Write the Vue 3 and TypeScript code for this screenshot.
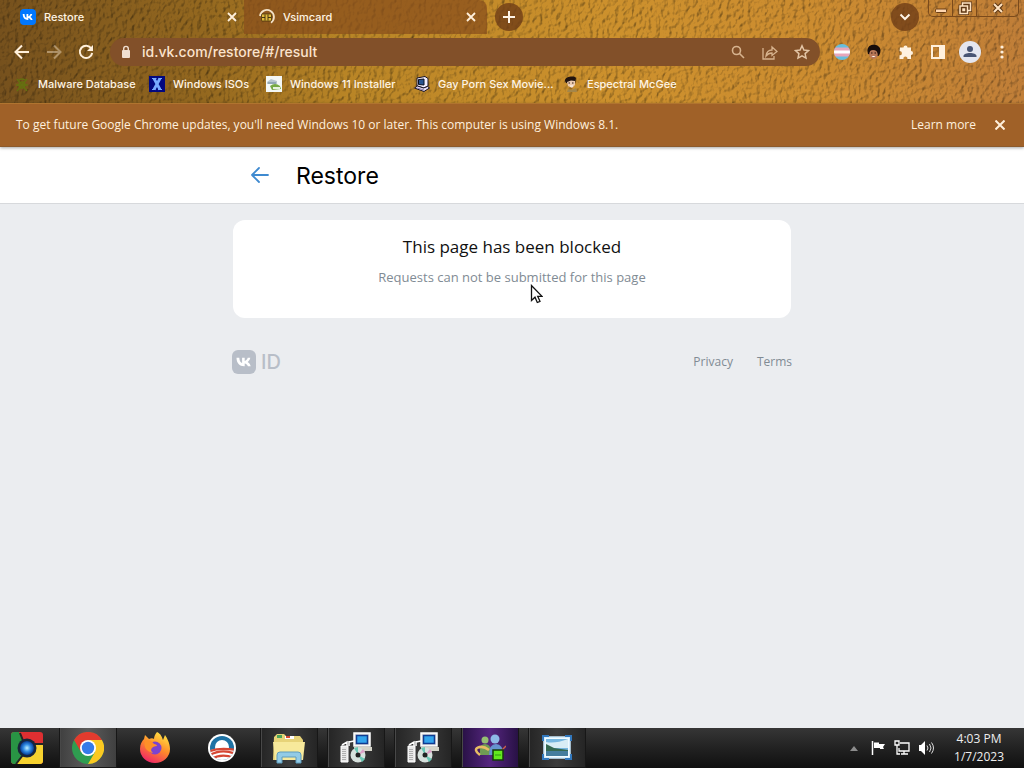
<script setup lang="ts">
import { ref } from 'vue'

interface Bookmark {
  label: string
  icon: string
}

const bookmarks: Bookmark[] = [
  { label: 'Malware Database', icon: 'bug' },
  { label: 'Windows ISOs', icon: 'x' },
  { label: 'Windows 11 Installer', icon: 'drive' },
  { label: 'Gay Porn Sex Movie...', icon: 'pc' },
  { label: 'Espectral McGee', icon: 'face' },
]
const address = ref('id.vk.com/restore/#/result')
</script>

<template>
  <div class="desktop">
    <header class="browser">
      <svg class="leather" aria-hidden="true">
        <defs>
          <linearGradient id="tan">
            <stop offset="0" stop-color="#76511d" />
            <stop offset=".2" stop-color="#94681f" />
            <stop offset=".34" stop-color="#b98526" />
            <stop offset=".6" stop-color="#cd912d" />
            <stop offset=".8" stop-color="#cc8c30" />
            <stop offset="1" stop-color="#c07e38" />
          </linearGradient>
          <filter id="grain" x="0" y="0" width="100%" height="100%" color-interpolation-filters="sRGB">
            <feTurbulence type="fractalNoise" baseFrequency="0.24 0.18" numOctaves="3" seed="8" result="n" />
            <feColorMatrix in="n" type="matrix" values="0 0 0 0 0  0 0 0 0 0  0 0 0 0 0  1 0 0 0 0" result="h" />
            <feDiffuseLighting in="h" surfaceScale="1" diffuseConstant="1.25" lighting-color="#fff" result="l">
              <feDistantLight azimuth="215" elevation="52" />
            </feDiffuseLighting>
            <feBlend in="SourceGraphic" in2="l" mode="multiply" />
          </filter>
        </defs>
        <rect width="100%" height="100%" fill="url(#tan)" filter="url(#grain)" />
      </svg>

      <div class="tabs">
        <div class="tab">
          <button class="tab-name">
            <svg class="i16" viewBox="0 0 16 16"><rect width="16" height="16" rx="4" fill="#0077ff" /><path d="M2.700 5h1.800c.1 2.400 1 3.500 2 3.800V5h1.800v2.300C9.400 7.200 10 6.200 10.400 5h1.800c-.3 1.300-1 2.300-1.800 2.900 1 .5 1.800 1.500 2.200 3h-1.900c-.4-1.100-1.200-1.800-2.400-2v2H8C4.800 10.900 2.800 8.900 2.700 5z" fill="#fff" /></svg>
            <span>Restore</span>
          </button>
          <button class="bare" aria-label="Close Restore"><svg class="i10" viewBox="0 0 10 10"><path d="M1 1l8 8M9 1L1 9" stroke="#fff0dc" stroke-width="1.800" /></svg></button>
        </div>
        <div class="tab inactive">
          <button class="tab-name">
            <svg class="i16" viewBox="0 0 16 16"><path d="M1 7A7 7 0 1 1 12 13.700" fill="none" stroke="#f3e2c8" stroke-width="1.800" /><rect x="2.500" y="5" width="10" height="7" rx="1" fill="#e0b83c" stroke="#4a350e" stroke-width=".8" /><path d="M3 8.500h3M9 8.500h3M6 5.500v6M9 5.500v6" stroke="#3a2a0c" stroke-width=".9" /></svg>
            <span>Vsimcard</span>
          </button>
          <button class="bare" aria-label="Close Vsimcard"><svg class="i10" viewBox="0 0 10 10"><path d="M1 1l8 8M9 1L1 9" stroke="#fff0dc" stroke-width="1.800" /></svg></button>
        </div>
        <button class="round" aria-label="New tab"><svg viewBox="0 0 14 14"><path d="M7 1v12M1 7h12" stroke="#fff4e6" stroke-width="2" /></svg></button>
        <button class="round search-tabs" aria-label="Search tabs"><svg viewBox="0 0 14 14"><path d="M2.500 4.500L7 9l4.500-4.500" fill="none" stroke="#fff4e6" stroke-width="2" /></svg></button>
        <div class="win-buttons">
          <button aria-label="Minimize"><svg viewBox="0 0 14 14"><rect x="1.500" y="8" width="11" height="3.500" rx="1" fill="#ffd6ae" stroke="#6a3d13" /></svg></button>
          <button aria-label="Restore window"><svg viewBox="0 0 14 14"><g fill="none"><path d="M4.500 4.500V2h8v7.500h-2.500M2 5h7.500v7.500H2zM5 8h1.500v1.500H5z" stroke="#5e3612" stroke-width="3" /><path d="M4.500 4.500V2h8v7.500h-2.500M2 5h7.500v7.500H2zM5 8h1.500v1.500H5z" stroke="#ffe3c2" stroke-width="1.500" /></g></svg></button>
          <button class="win-close" aria-label="Close window"><svg viewBox="0 0 14 14"><path d="M3 3l8 8M11 3l-8 8" stroke="#5e3612" stroke-width="4" /><path d="M3 3l8 8M11 3l-8 8" stroke="#ffe3c2" stroke-width="2" /></svg></button>
        </div>
      </div>

      <div class="toolbar">
        <button class="bare" aria-label="Back"><svg class="i16" viewBox="0 0 16 16"><path d="M15 8H2M8 1.500L1.500 8 8 14.500" fill="none" stroke="#fff0dc" stroke-width="2" /></svg></button>
        <button class="bare" aria-label="Forward"><svg class="i16 dim" viewBox="0 0 16 16"><path d="M1 8h13M8 1.500L14.500 8 8 14.500" fill="none" stroke="#fff0dc" stroke-width="2" /></svg></button>
        <button class="bare" aria-label="Reload"><svg class="i16" viewBox="0 0 16 16"><path d="M13.300 4.500A6.200 6.200 0 1 0 14.200 9" fill="none" stroke="#fff0dc" stroke-width="2" /><path d="M15 1v6H9z" fill="#fff0dc" /></svg></button>
        <div class="omnibox">
          <svg class="i16" viewBox="0 0 16 16"><rect x="4" y="6" width="8" height="8" rx="1" fill="#f0dfd0" /><path d="M5.700 6.500V4.700a2.300 2.300 0 0 1 4.600 0v1.800" fill="none" stroke="#f0dfd0" stroke-width="1.400" /></svg>
          <input v-model="address" type="text" aria-label="Address" spellcheck="false" />
          <button class="bare" aria-label="Zoom"><svg class="i16" viewBox="0 0 16 16"><g fill="none" stroke="#d7b38e" stroke-width="1.600"><circle cx="6.500" cy="6.500" r="4" /><path d="M9.500 9.500l4.500 4.500" /></g></svg></button>
          <button class="bare" aria-label="Share"><svg class="i16" viewBox="0 0 16 16"><g fill="none" stroke="#d7b38e" stroke-width="1.300"><path d="M1 4v11h11v-3" /><path d="M4 12c.5-4 2.500-6 6-6V3l5 4.500-5 4V9c-2.500 0-4.500 1-6 3z" /></g></svg></button>
          <button class="bare" aria-label="Bookmark this page"><svg class="i16" viewBox="0 0 16 16"><path d="M8 1.800l1.900 4.200 4.600.5-3.400 3.100.9 4.500L8 11.800l-4 2.300.9-4.500L1.500 6.500l4.600-.5z" fill="none" stroke="#e3c5a6" stroke-width="1.500" /></svg></button>
        </div>
        <div class="extensions">
          <button class="bare" aria-label="Flag extension"><svg class="i16" viewBox="0 0 16 16"><clipPath id="ball"><circle cx="8" cy="8" r="8" /></clipPath><g clip-path="url(#ball)"><path fill="#67bedc" d="M0 0h16v16H0z" /><path fill="#e8a6b9" d="M0 3.500h16v9H0z" /><path fill="#fff" d="M0 6.500h16v3H0z" /></g></svg></button>
          <button class="bare" aria-label="Face extension"><svg class="i16" viewBox="0 0 16 16"><path d="M2 10C0 3 4 .5 8.500.700 14 1 16.500 7 12.500 12z" fill="#170d0b" /><ellipse cx="7.500" cy="10" rx="4.300" ry="5" fill="#b87858" /><path d="M3 9c0-2 2-3 4-3 3 0 4 1 5 4l2-5-6-4-5 3z" fill="#170d0b" /><path d="M5.500 12q2 2 4 0z" fill="#fff" /><path d="M5 9h1.500M8.500 9H10" stroke="#2c1510" /></svg></button>
          <button class="bare" aria-label="Extensions"><svg class="i16" viewBox="0 0 16 16"><path d="M2 3.500h3.500a2 2 0 1 1 4 0H13V7a2 2 0 1 1 0 4v4H9.300a2 2 0 1 0-3.800 0H1.500v-3.800a2 2 0 1 0 0-3.900z" fill="#fff2e0" /></svg></button>
          <button class="bare" aria-label="Side panel"><svg class="i16" viewBox="0 0 16 16"><path d="M2 2h12v12H2z" fill="none" stroke="#fff0dc" stroke-width="2" /><path d="M9 2h5v12H9z" fill="#fff0dc" /></svg></button>
          <button class="bare avatar" aria-label="Profile"><svg viewBox="0 0 22 22"><circle cx="11" cy="11" r="11" fill="#e4e6ef" /><circle cx="11" cy="8" r="3" fill="#485574" /><path d="M4.500 16v-1c0-4 13-4 13 0v1z" fill="#485574" /></svg></button>
          <button class="bare" aria-label="Menu"><svg class="i16" viewBox="0 0 16 16"><g fill="#fff0dc"><circle cx="8" cy="3" r="1.600" /><circle cx="8" cy="8" r="1.600" /><circle cx="8" cy="13" r="1.600" /></g></svg></button>
        </div>
      </div>

      <nav class="bookmarks" aria-label="Bookmarks">
        <a v-for="b in bookmarks" :key="b.label" href="#">
          <svg class="i16" viewBox="0 0 16 16">
            <g v-if="b.icon === 'bug'" fill="none" stroke="#657010" stroke-width="1.400"><circle cx="8" cy="9" r="3" /><path d="M3 3l10 12M13 3L3 15M5 4q3-2 6 0M2 9h12" /></g>
            <g v-else-if="b.icon === 'x'"><path fill="#02087f" d="M0 0h16v16H0z" /><path d="M5 2.500l6 11M11 2.500l-6 11" stroke="#76a9ff" stroke-width="2.800" /><path d="M3 2.500h4.500M9.500 2.500h3.500M3 13.500h3.500M9 13.500h4" stroke="#76a9ff" /></g>
            <g v-else-if="b.icon === 'drive'"><path fill="#f3f7f6" d="M0 0h16v16H0z" /><path d="M1 6l4-3 6 2v3H1z" fill="#b7c6ce" /><path d="M2 7h8" stroke="#6a8795" /><path d="M4 10q5-4 10 0l1 3-9 1z" fill="#75a943" /><path d="M7 12h7" stroke="#e7f2dd" stroke-width="2" /></g>
            <g v-else-if="b.icon === 'pc'"><path d="M3 2l8-1.500 3 2V10l-4 2-7-2z" fill="#f3efff" stroke="#171326" /><path d="M4.500 3.500l5.500-.5v6l-5.500-.5z" fill="#28538f" stroke="#090e20" /><path d="M.5 12l3-2 6 2 4-1.500 2 1.500-5.500 3.500z" fill="#e8def8" stroke="#171326" /><path d="M3 12l7 2" stroke="#8c80ad" /></g>
            <g v-else><path d="M2 5C1 1 11-1 13 2l-1 6-9-1z" fill="#21130e" /><path d="M4 6l4-1.500L12 5v4l-3 3-4-2z" fill="#eccbb0" /><path d="M5.500 7h1.500M9 7h1.500" stroke="#2c1b15" /><path d="M5 13l3 1 5-2 1 4H4z" fill="#a4864a" /><path d="M7 10h3" stroke="#fff" /></g>
          </svg>
          <span>{{ b.label }}</span>
        </a>
      </nav>
    </header>

    <aside class="infobar">
      <p>To get future Google Chrome updates, you'll need Windows 10 or later. This computer is using Windows 8.1.</p>
      <a href="#">Learn more</a>
      <button class="bare" aria-label="Dismiss"><svg class="i10" viewBox="0 0 10 10"><path d="M.5.5l9 9M9.500.5l-9 9" stroke="#fff0dc" stroke-width="2" /></svg></button>
    </aside>

    <main class="page">
      <div class="page-head">
        <div class="head-inner">
          <button class="bare" aria-label="Go back"><svg class="back" viewBox="0 0 20 18"><path d="M18 8H2M9 1L2 8l7 7" fill="none" stroke="#3f8ad0" stroke-width="1.800" stroke-linecap="round" stroke-linejoin="round" /></svg></button>
          <h1>Restore</h1>
        </div>
      </div>
      <div class="column">
        <section class="card">
          <h2>This page has been blocked</h2>
          <p>Requests can not be submitted for this page</p>
          <svg class="cursor" viewBox="0 0 13 20"><path d="M1.500 1.500v15l3.500-3.300 2.300 5.300 2.700-1.200-2.300-5H12z" fill="#fff" stroke="#111" stroke-width="1.300" /></svg>
        </section>
        <footer>
          <a class="brand" href="#" aria-label="VK ID">
            <svg viewBox="0 0 24 24"><rect width="24" height="24" rx="6" fill="#b8bec8" /><path d="M4 7.300h2.800c.1 3.500 1.500 5 2.800 5.300V7.300h2.600v3.100c1.500-.2 2.500-1.500 3-3.100h2.600c-.4 2-1.500 3.500-2.700 4.200 1.400.7 2.500 2 3.100 4.300h-2.800c-.5-1.700-1.700-2.700-3.200-2.900v2.900h-.6C7 15.800 4.100 12.800 4 7.300z" fill="#fff" transform="translate(.5 .5)" /></svg>
            <span>ID</span>
          </a>
          <div class="links"><a href="#">Privacy</a><a href="#">Terms</a></div>
        </footer>
      </div>
    </main>

    <div class="taskbar">
      <div class="apps">
        <button aria-label="Classic Chrome"><svg viewBox="0 0 32 32"><clipPath id="sq"><rect width="32" height="32" rx="3" /></clipPath><radialGradient id="blue"><stop offset="0" stop-color="#c1f0ff" /><stop offset=".5" stop-color="#358fe5" /><stop offset="1" stop-color="#063c96" /></radialGradient><g clip-path="url(#sq)"><path fill="#de2f31" d="M0 0h32v32H0z" /><path d="M0 0h8l7 17-9 15H0z" fill="#299444" /><path d="M23 13h9v19H5l9-11z" fill="#f7d22f" /><path d="M9 1l6 15M32 12H17M5 32l10-13" stroke="#252525" stroke-width="2" /></g><circle cx="16" cy="16" r="9.500" fill="#18253a" /><circle cx="16" cy="16" r="7" fill="url(#blue)" /></svg></button>
        <button class="open current" aria-label="Google Chrome"><svg viewBox="0 0 32 32"><circle cx="16" cy="16" r="16" fill="#2f9d50" /><path d="M2.100 8A16 16 0 0 1 29.900 8L16 8 9 20z" fill="#e33b2e" /><path d="M16 8h13.900A16 16 0 0 1 16 32l7-12z" fill="#fbc921" /><circle cx="16" cy="16" r="8" fill="#fff" /><circle cx="16" cy="16" r="6.200" fill="#367be8" /></svg></button>
        <button aria-label="Firefox"><svg viewBox="0 0 32 32"><linearGradient id="fire" x1=".8" y1="0" x2=".3" y2="1"><stop stop-color="#ffea45" /><stop offset=".5" stop-color="#ff8a2a" /><stop offset="1" stop-color="#ed2468" /></linearGradient><path d="M18 0c4 2 5 5 6 8l2-5c2 3 5 8 5 14a15 14 0 0 1-30 0C1 12 3 9 5 7l1-4 4 4c2-1 4-1 5 0 0-2 1-5 3-7z" fill="url(#fire)" /><circle cx="16" cy="16" r="6.500" fill="#7b43cf" /><path d="M6 9c4-2 7 0 9 3 2 0 3 1 3 2-5 0-8 4-4 7-6-1-10-6-8-12z" fill="#ff9028" /></svg></button>
        <button aria-label="Obama logo"><svg viewBox="0 0 32 32"><clipPath id="disc"><circle cx="16" cy="16" r="12" /></clipPath><circle cx="16" cy="16" r="14" fill="#fff" /><g clip-path="url(#disc)"><path fill="#1e72a4" d="M0 0h32v32H0z" /><circle cx="16" cy="15" r="7" fill="#fff" /><path d="M0 20q17-8 32 0v12H0z" fill="#fff" /><path d="M2 20q10-5 28-2M2 24q13-8 28-2M4 28q12-8 26-1" fill="none" stroke="#d54734" stroke-width="2.200" /></g></svg></button>
        <button class="open" aria-label="File Explorer"><svg viewBox="0 0 32 32"><path d="M1 5l3-3h7l2 2h14l3 4v20H0z" fill="#e7d378" /><path d="M4 3h5v3H4z" fill="#4ca359" /><path d="M12 4h9v3h-9z" fill="#fff" /><path d="M13 5h4" stroke="#d84a34" stroke-width="2" /><path d="M0 10h32l-2 18H2z" fill="#f7e99b" /><path d="M4 31v-8q0-3 3-3h18q3 0 3 3v8h-5v-6H9v6z" fill="#93cbe6" stroke="#5e9cbd" /></svg></button>
        <button v-for="n in 2" :key="n" class="open" :aria-label="'Setup ' + n"><svg viewBox="0 0 32 32"><path d="M14 1h16v13H14z" fill="#dcdcdc" stroke="#fff" stroke-width="1.500" /><path d="M16.500 3.500h11v8h-11z" fill="#33a5ed" stroke="#103b91" stroke-width="1.500" /><path d="M14 15h18v4H14z" fill="#d4d4c8" /><path d="M1 14h7v16H1z" fill="#e8e8e8" stroke="#fff" /><path d="M2 13l5-3v4M9 10l5-1M9 14V9" fill="none" stroke="#fff" stroke-width="1.500" /><path d="M3 17v11M5 17v11" stroke="#777" stroke-dasharray="1 1" /><circle cx="18" cy="23" r="7.500" fill="#d7e1dd" /><path d="M18 23l-4-7 4-1zM18 23l4 7 3-3z" fill="#6ac8b5" /><path d="M18 23l7-3-2-3z" fill="#dca0c7" /><circle cx="18" cy="23" r="2.500" fill="#222" /></svg></button>
        <button class="open purple" aria-label="Messenger"><svg viewBox="0 0 32 32"><circle cx="11" cy="8" r="3.500" fill="#95be72" /><path d="M6 23V18q0-6 5-6t6 6v5z" fill="#6f9c54" /><circle cx="21" cy="7" r="4.500" fill="#8db9e6" /><path d="M15 23q0-11 7-11t7 11z" fill="#6593ce" /><path d="M6 23C-4 16 7 12 15 18" fill="none" stroke="#e8bd63" stroke-width="2.500" /><path d="M27 19l5-5" stroke="#cb604a" stroke-width="1.500" /><path d="M19 18h10v10H19z" fill="#62e91d" stroke="#153c0a" stroke-width="1.500" /><path d="M21 23h6" stroke="#319710" /></svg></button>
        <button class="open" aria-label="Picture viewer"><svg viewBox="0 0 32 32"><path d="M3 5h26v21H3z" fill="#f1faff" stroke="#cce9fb" stroke-width="1.500" /><path d="M2 9V4h6M24 4h6v5M2 22v5h6M24 27h6v-5" fill="none" stroke="#3278bd" stroke-width="2" /><path d="M5 7h22v17H5z" fill="#76b7e0" /><path d="M5 10q9 2 22-3v9H5z" fill="#d8edf5" /><path d="M5 12l8 4 14 2v2H5z" fill="#356951" /><path d="M5 19h22v5H5z" fill="#447d9e" /></svg></button>
      </div>
      <div class="tray">
        <button class="bare" aria-label="Show hidden icons"><svg class="i16" viewBox="0 0 16 16"><path d="M4 11l4-5 4 5z" fill="#8c8c8c" /></svg></button>
        <button class="bare" aria-label="Action center"><svg class="i16" viewBox="0 0 16 16"><path d="M2.500 1v14" stroke="#fff" stroke-width="1.500" /><path d="M4 2.500h5v1.500h6l-2 3 1 2h-4V8H4z" fill="#fff" /></svg></button>
        <button class="bare" aria-label="Network"><svg class="i16" viewBox="0 0 16 16"><g fill="none" stroke="#fff" stroke-width="1.300"><path d="M6 3h9v8H5V8M10 11v3M7 14h7" /><path d="M1 1h4v4H1zM3 5v9h3" /></g></svg></button>
        <button class="bare" aria-label="Volume"><svg class="i16" viewBox="0 0 16 16"><path d="M1 5h2l4-4v14l-4-4H1z" fill="#fff" /><path d="M9 5.500q2 2.500 0 5M11.500 4q3 4 0 8M13.500 2.500q4 5.500 0 11" fill="none" stroke="#ddd" /></svg></button>
        <button class="clock"><span>4:03 PM</span><span>1/7/2023</span></button>
      </div>
    </div>
  </div>
</template>

<style>
body { margin: 0; }
</style>

<style scoped>
.desktop { min-height: 100vh; display: flex; flex-direction: column; background: #ebedf0; font-family: "Open Sans", sans-serif; }
button { margin: 0; padding: 0; border: 0; background: none; color: inherit; font: inherit; }
a { color: inherit; text-decoration: none; }
svg { display: block; flex: none; }
h1, h2, p { margin: 0; font-weight: 400; }
.i16 { width: 16px; height: 16px; }
.i10 { width: 10px; height: 10px; }
.dim { opacity: .4; }
.bare { display: flex; align-items: center; justify-content: center; }

.browser { position: relative; isolation: isolate; color: #fff4e4; font: 500 12px/16px Inter, sans-serif; }
.leather { position: absolute; inset: 0; width: 100%; height: 100%; z-index: -1; }
.tabs { display: flex; height: 34px; align-items: center; padding-left: 8px; padding-right: 5px; }
.tab { display: flex; flex: 0 1 236px; height: 34px; align-items: center; justify-content: space-between; box-sizing: border-box; padding: 0 7px 0 12px; }
.tab.inactive { flex-basis: 243px; padding: 0 11px 0 15px; background: rgba(136, 77, 28, .72); border-radius: 0 8px 0 0; }
.tab-name { display: flex; align-items: center; gap: 8px; font-size: 11px; }
.round { display: flex; align-items: center; justify-content: center; width: 28px; height: 28px; margin-left: 8px; border-radius: 50%; background: rgba(111, 61, 22, .8); }
.round svg { width: 14px; height: 14px; }
.search-tabs { margin-left: auto; }
.win-buttons { display: flex; align-self: flex-start; margin-left: 9px; border: 1px solid #7b4a1b; border-top: 0; border-radius: 0 0 5px 5px; }
.win-buttons button { display: flex; align-items: center; justify-content: center; width: 24px; height: 16px; border-right: 1px solid #7b4a1b; }
.win-buttons .win-close { width: 41px; border-right: 0; }
.win-buttons svg { width: 14px; height: 14px; }

.toolbar { display: flex; align-items: center; gap: 16px; height: 36px; padding: 0 14px; }
.omnibox { flex: 1; display: flex; align-items: center; gap: 16px; height: 28px; padding: 0 10px 0 8px; border-radius: 14px; background: #825029; }
.omnibox input { flex: 1; min-width: 0; margin-left: -8px; padding: 0; border: 0; outline: 0; background: none; color: #fbe3cc; font: 500 14px/20px Inter, sans-serif; }
.extensions { display: flex; align-items: center; gap: 16px; margin-left: -2px; }
.avatar svg { width: 22px; height: 22px; }
.avatar { margin: 0 -3px; }

.bookmarks { display: grid; grid-template-columns: 118px 100px 131px 132px 111px; gap: 17px; align-items: center; height: 28px; padding: 0 14px 5px; font-size: 11px; white-space: nowrap; }
.bookmarks a { display: flex; align-items: center; gap: 8px; }

.infobar { display: flex; align-items: center; height: 44px; box-sizing: border-box; padding: 0 19px 0 16px; border-top: 1px solid #b0742f; border-bottom: 1px solid #8c5a2c; background: #a06128; color: #fff0de; font: 500 12px/16px "Open Sans", sans-serif; box-shadow: 0 1px 3px rgba(0, 0, 0, .35); z-index: 1; }
.infobar p { flex: 1; }
.infobar button { margin-left: 19px; }

.page { flex: 1; }
.page-head { height: 57px; box-sizing: border-box; border-bottom: 1px solid #d7d9dc; background: #fff; }
.head-inner { display: flex; align-items: center; gap: 26px; max-width: 560px; height: 56px; margin: 0 auto; box-sizing: border-box; padding: 2px 18px 0; }
.back { width: 20px; height: 18px; }
h1 { color: #000; font: 400 23px/28px Inter, sans-serif; }
.column { max-width: 560px; margin: 0 auto; padding-top: 16px; }
.card { position: relative; height: 98px; margin: 0 1px; box-sizing: border-box; padding-top: 13px; border-radius: 12px; background: #fff; text-align: center; }
h2 { color: #111; font-size: 17px; line-height: 28px; }
.card p { margin-top: 6px; color: #818b94; font-size: 13px; line-height: 20px; }
.cursor { position: absolute; left: 297px; top: 64px; width: 13px; height: 20px; }
footer { display: flex; align-items: center; justify-content: space-between; margin-top: 32px; height: 24px; color: #818b94; font-size: 12px; line-height: 20px; }
.brand { display: flex; align-items: center; gap: 5px; color: #b8bec8; font: 500 20px/24px Inter, sans-serif; }
.brand svg { width: 24px; height: 24px; }
.links { display: flex; gap: 24px; }

.taskbar { display: flex; justify-content: space-between; height: 40px; background: linear-gradient(#363636, #202020 55%, #101010); color: #eee; }
.apps { display: flex; gap: 9px; }
.apps button { display: flex; align-items: center; justify-content: center; width: 58px; box-sizing: border-box; }
.apps button:first-child { width: 54px; margin-right: -4px; }
.apps svg { width: 32px; height: 32px; }
.apps .open { border: 1px solid #171717; border-top: 0; background: linear-gradient(90deg, #252525, #3c3c3c, #252525); box-shadow: inset 1px 0 #484848; }
.apps .current { background: linear-gradient(90deg, #404040, #5c5c5c, #404040); }
.apps .purple { background: linear-gradient(90deg, #281145, #562680, #281145); }
.tray { display: flex; align-items: center; gap: 8px; padding-right: 20px; }
.clock { display: flex; flex-direction: column; align-items: center; margin-left: 12px; font-size: 12px; line-height: 18px; }
</style>
